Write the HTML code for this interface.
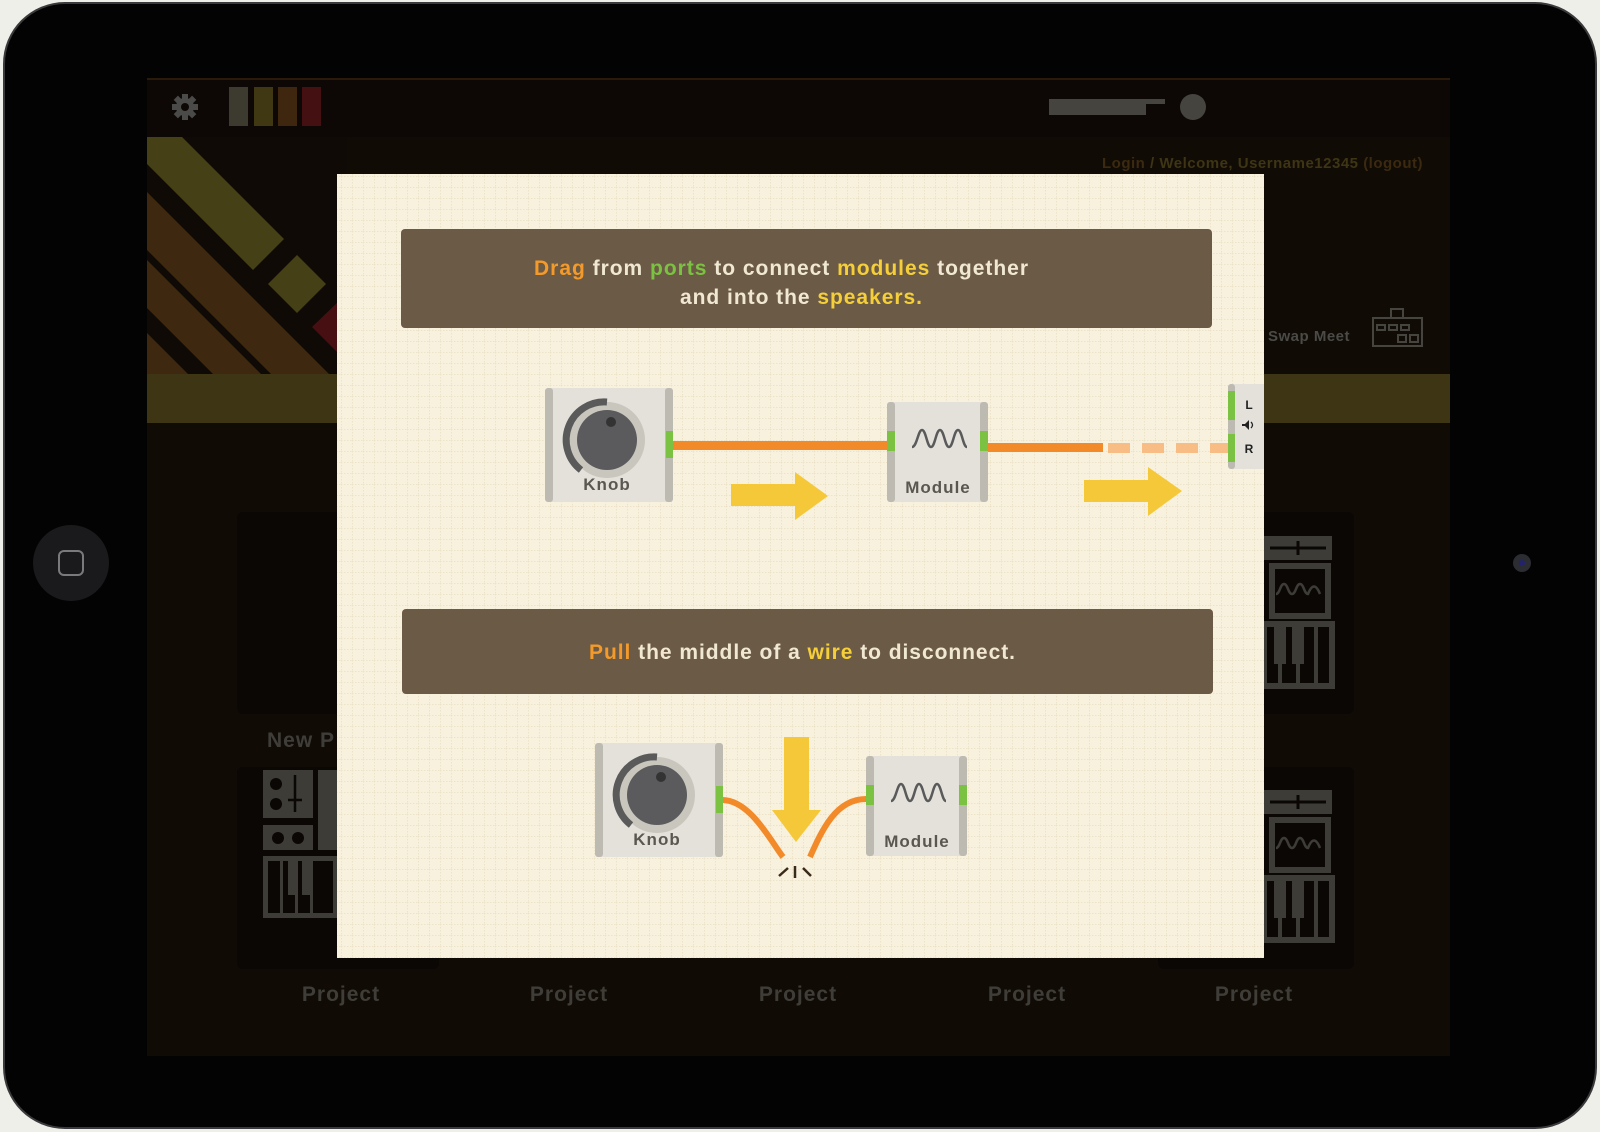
<!DOCTYPE html>
<html><head><meta charset="utf-8"><style>
html,body{margin:0;padding:0;background:#efefea;}
svg{display:block}
text{font-family:"Liberation Sans","DejaVu Sans",sans-serif;font-weight:bold}
</style></head><body>
<svg width="1600" height="1132" viewBox="0 0 1600 1132" xmlns="http://www.w3.org/2000/svg">
<defs>
<pattern id="grid" width="11" height="11" patternUnits="userSpaceOnUse">
<rect width="11" height="11" fill="#f8f1de"/>
<path d="M0 0.5H11M0.5 0V11" stroke="#ece3c8" stroke-width="1" stroke-dasharray="1.5 1.5"/>
</pattern>
<clipPath id="stc"><rect x="147" y="137" width="200" height="237"/></clipPath>
<clipPath id="mc"><rect x="337" y="174" width="927" height="784"/></clipPath>
<g id="knob">
<rect x="0" y="0" width="128" height="114" rx="4" fill="#e3e1da"/>
<rect x="0" y="0" width="8" height="114" rx="3" fill="#bdbab2"/>
<rect x="120" y="0" width="8" height="114" rx="3" fill="#bdbab2"/>
<rect x="121" y="43" width="7" height="27" fill="#7cc242"/>
<circle cx="62" cy="52" r="38" fill="#c9c6bd"/>
<path d="M36 82 A38 38 0 0 1 62 14" fill="none" stroke="#5a5a5a" stroke-width="7"/>
<circle cx="62" cy="52" r="30" fill="#5b5b5d"/>
<circle cx="66" cy="34" r="5" fill="#333"/>
<text x="62" y="102" font-size="17" fill="#5a5751" text-anchor="middle" letter-spacing="1">Knob</text>
</g>
<g id="mod">
<rect x="0" y="0" width="101" height="100" rx="4" fill="#e3e1da"/>
<rect x="0" y="0" width="8" height="100" rx="3" fill="#bdbab2"/>
<rect x="93" y="0" width="8" height="100" rx="3" fill="#bdbab2"/>
<rect x="0" y="29" width="8" height="20" fill="#7cc242"/>
<rect x="93" y="29" width="8" height="20" fill="#7cc242"/>
<path d="M25 45 C30 45 31 28 35 28 C39 28 40 45 44 45 C48 45 49 28 53 28 C57 28 58 45 62 45 C66 45 67 28 71 28 C75 28 76 45 80 45" fill="none" stroke="#5a5a5a" stroke-width="2.5"/>
<text x="51" y="91" font-size="17" fill="#5a5751" text-anchor="middle" letter-spacing="1">Module</text>
</g>
<g id="synth">
<rect x="0" y="0" width="68" height="24" fill="#3d3c37"/>
<path d="M6 12H62M34 5V19" stroke="#0b0705" stroke-width="3"/>
<rect x="8" y="30" width="56" height="50" fill="none" stroke="#3d3c37" stroke-width="6"/>
<path d="M12 58 C16 58 16 48 20 48 C24 48 24 58 28 58 C32 58 32 48 36 48 C40 48 40 58 44 58 C48 48 52 48 56 58" fill="none" stroke="#3d3c37" stroke-width="2.5"/>
<rect x="0" y="88" width="68" height="62" fill="none" stroke="#3d3c37" stroke-width="6"/>
<rect x="10" y="88" width="12" height="40" fill="#3d3c37"/><rect x="28" y="88" width="12" height="40" fill="#3d3c37"/>
<path d="M16 128V150M34 128V150M52 88V150" stroke="#3d3c37" stroke-width="4"/>
</g>
</defs>

<!-- device -->
<rect x="3" y="2" width="1594" height="1127" rx="62" fill="#3a3a3c"/>
<rect x="5" y="4" width="1590" height="1123" rx="60" fill="#030304"/>

<!-- screen -->
<rect x="147" y="78" width="1303" height="978" fill="#110b06"/>
<rect x="147" y="78" width="1303" height="2" fill="#2a1a0a"/>
<rect x="147" y="80" width="1303" height="57" fill="#0d0805"/>
<g transform="translate(185,107)" fill="#4a4a48">
<circle r="9"/>
<rect x="-3" y="-13" width="6" height="26"/><rect x="-13" y="-3" width="26" height="6"/>
<rect x="-3" y="-13" width="6" height="26" transform="rotate(45)"/><rect x="-3" y="-13" width="6" height="26" transform="rotate(-45)"/>
<circle r="4" fill="#0d0805"/>
</g>
<rect x="229" y="87" width="19" height="39" fill="#3d3a30"/>
<rect x="254" y="87" width="19" height="39" fill="#403812"/>
<rect x="278" y="87" width="19" height="39" fill="#3e260f"/>
<rect x="302" y="87" width="19" height="39" fill="#441012"/>
<rect x="1049" y="99" width="116" height="5" fill="#45443f"/>
<rect x="1049" y="99" width="97" height="16" fill="#45443f"/>
<circle cx="1193" cy="107" r="13" fill="#45443f"/>

<!-- stripes -->
<g clip-path="url(#stc)">
<rect x="147" y="137" width="200" height="237" fill="#0f0a05"/>
<polygon points="182,137 284,239 253,270 147,164 147,102" fill="#464016"/>
<polygon points="268,284 297,255 326,284 297,313" fill="#464016"/>
<polygon points="147,192 147,250 450,553 450,495" fill="#3e280f"/>
<polygon points="147,260 147,308 450,611 450,563" fill="#3e280f"/>
<polygon points="147,333 147,400 450,703 450,636" fill="#3e280f"/>
<polygon points="312,327 340,300 370,330 342,357" fill="#480f12"/>
</g>
<rect x="147" y="374" width="1303" height="49" fill="#3e3514"/>

<text x="1423" y="168" font-size="15" fill="#3e3514" text-anchor="end" letter-spacing="0.5"><tspan fill="#3b2a10">Login</tspan> / Welcome, Username12345 <tspan fill="#3b2a10">(logout)</tspan></text>
<text x="1268" y="341" font-size="15" fill="#4a4a46" letter-spacing="0.5">Swap Meet</text>
<g fill="none" stroke="#45443f" stroke-width="2">
<rect x="1373" y="318" width="49" height="28"/><rect x="1391" y="309" width="12" height="9"/>
<rect x="1377" y="325" width="8" height="5"/><rect x="1389" y="325" width="8" height="5"/><rect x="1401" y="325" width="8" height="5"/>
<rect x="1398" y="335" width="8" height="7"/><rect x="1410" y="335" width="8" height="7"/>
</g>

<!-- tiles -->
<g fill="#0b0705">
<rect x="237" y="512" width="202" height="202" rx="6"/>
<rect x="1158" y="512" width="196" height="202" rx="6"/>
<rect x="237" y="767" width="202" height="202" rx="6"/>
<rect x="1158" y="767" width="196" height="202" rx="6"/>
</g>
<text x="267" y="747" font-size="21" fill="#3f3d38" letter-spacing="1">New P</text>
<text x="1230" y="747" font-size="21" fill="#3f3d38" letter-spacing="1">ect</text>
<g font-size="21" fill="#3f3d38" text-anchor="middle" letter-spacing="1">
<text x="341" y="1001">Project</text><text x="569" y="1001">Project</text><text x="798" y="1001">Project</text><text x="1027" y="1001">Project</text><text x="1254" y="1001">Project</text>
</g>
<use href="#synth" x="1264" y="536"/>
<use href="#synth" x="1264" y="790"/>
<g fill="#3d3c37">
<rect x="263" y="770" width="50" height="48"/><rect x="263" y="825" width="50" height="25"/>
<rect x="318" y="770" width="20" height="80"/>
<rect x="263" y="856" width="75" height="62"/>
</g>
<g fill="#0b0705"><circle cx="276" cy="784" r="6"/><circle cx="276" cy="804" r="6"/><circle cx="278" cy="838" r="6"/><circle cx="298" cy="838" r="6"/>
<path d="M295 775V812M288 800H302" stroke="#0b0705" stroke-width="2.5"/>
<rect x="268" y="861" width="65" height="52"/></g>
<g fill="#3d3c37"><rect x="280" y="861" width="3" height="52"/><rect x="295" y="861" width="3" height="52"/><rect x="310" y="861" width="3" height="52"/><rect x="288" y="861" width="10" height="34"/><rect x="302" y="861" width="10" height="34"/></g>

<!-- home button, camera -->
<circle cx="71" cy="563" r="38" fill="#1a1a1c"/>
<rect x="59" y="551" width="24" height="24" rx="5" fill="none" stroke="#7a7a7c" stroke-width="2"/>
<circle cx="1522" cy="563" r="9" fill="#2b2d33"/><circle cx="1522" cy="563" r="3" fill="#22236a"/>

<!-- modal -->
<rect x="337" y="174" width="927" height="784" fill="url(#grid)"/>
<rect x="401" y="229" width="811" height="99" rx="4" fill="#6b5a45"/>
<text x="534" y="275" font-size="21" fill="#f0e8d2" textLength="494" lengthAdjust="spacing"><tspan fill="#f39a2a">Drag</tspan> from <tspan fill="#7cc242">ports</tspan> to connect <tspan fill="#f5cf3a">modules</tspan> together</text>
<text x="680" y="304" font-size="21" fill="#f0e8d2" textLength="242" lengthAdjust="spacing">and into the <tspan fill="#f5cf3a">speakers.</tspan></text>

<rect x="402" y="609" width="811" height="85" rx="4" fill="#6b5a45"/>
<text x="589" y="659" font-size="21" fill="#f0e8d2" textLength="426" lengthAdjust="spacing"><tspan fill="#f39a2a">Pull</tspan> the middle of a <tspan fill="#f5cf3a">wire</tspan> to disconnect.</text>

<rect x="673" y="441" width="216" height="9" fill="#f28a2a"/>
<rect x="987" y="443" width="116" height="9" fill="#f28a2a"/>
<g fill="#f7bd85"><rect x="1108" y="443" width="22" height="10"/><rect x="1142" y="443" width="22" height="10"/><rect x="1176" y="443" width="22" height="10"/><rect x="1210" y="443" width="18" height="10"/></g>
<use href="#knob" x="545" y="388"/>
<use href="#mod" x="887" y="402"/>
<g clip-path="url(#mc)">
<rect x="1228" y="384" width="44" height="85" rx="4" fill="#e3e1da"/>
<rect x="1228" y="384" width="7" height="85" rx="3" fill="#bdbab2"/>
<rect x="1228" y="391" width="7" height="29" fill="#7cc242"/>
<rect x="1228" y="434" width="7" height="28" fill="#7cc242"/>
</g>
<text x="1249" y="409" font-size="12" fill="#222" text-anchor="middle">L</text>
<path d="M1242 424h3l4-4v10l-4-4h-3z" fill="#222"/>
<path d="M1251 422q3 3 0 6" fill="none" stroke="#222" stroke-width="1.3"/>
<text x="1249" y="453" font-size="12" fill="#222" text-anchor="middle">R</text>
<polygon points="731,484 795,484 795,472 828,496 795,520 795,506 731,506" fill="#f5c83a"/>
<polygon points="1084,480 1148,480 1148,467 1182,491 1148,516 1148,502 1084,502" fill="#f5c83a"/>

<path d="M722 800 C750 800 770 840 783 857" fill="none" stroke="#f28a2a" stroke-width="6"/>
<path d="M866 799 C836 799 822 830 810 857" fill="none" stroke="#f28a2a" stroke-width="6"/>
<use href="#knob" x="595" y="743"/>
<use href="#mod" x="866" y="756"/>
<polygon points="784,737 809,737 809,810 821,810 796,842 772,810 784,810" fill="#f5c83a"/>
<g stroke="#3a2a18" stroke-width="2.5"><path d="M788 868 L779 876"/><path d="M795 866 V878"/><path d="M803 868 L811 876"/></g>
</svg>
</body></html>
